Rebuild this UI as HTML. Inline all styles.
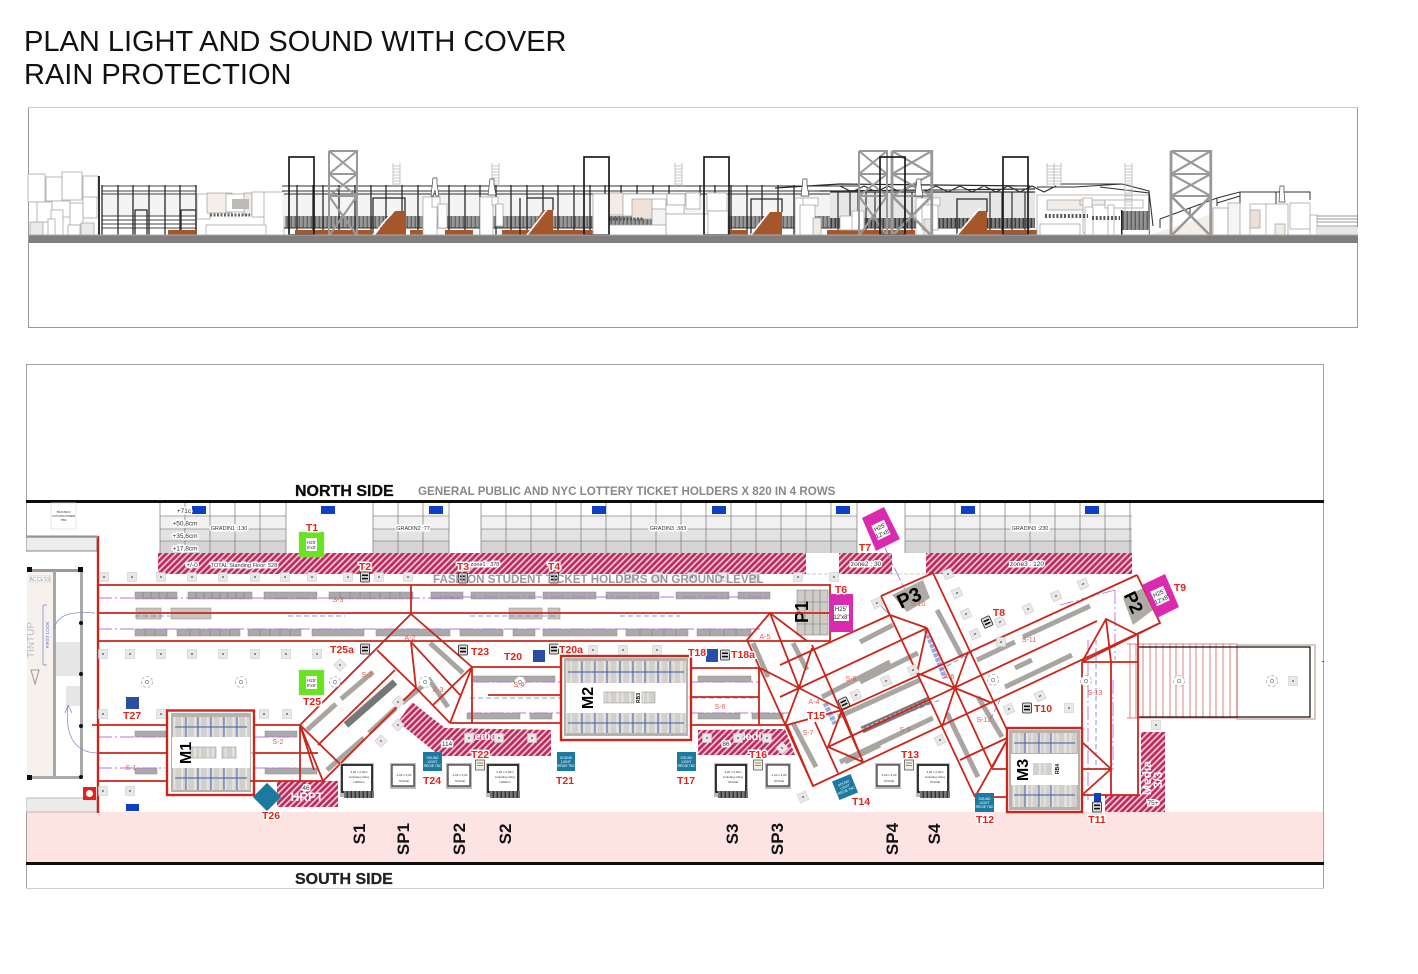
<!DOCTYPE html>
<html lang="en"><head><meta charset="utf-8"><title>Plan Light and Sound</title>
<style>
html,body{margin:0;padding:0;background:#fff;width:1418px;height:974px;overflow:hidden}
svg{display:block;position:absolute;left:0;top:0}
text{font-family:"Liberation Sans",Arial,sans-serif}
.b{filter:url(#soft)}
.tl{fill:#e3241b;font-weight:700;font-size:10.5px;text-anchor:middle;paint-order:stroke;stroke:#fff;stroke-width:3px}
.sl{fill:#ea5a50;font-size:7px;text-anchor:middle}
.v{font-weight:700;font-size:17px;text-anchor:middle;fill:#111}
.sm{font-size:5.5px;fill:#333;text-anchor:middle;paint-order:stroke;stroke:#fff;stroke-width:3px}
.h{font-size:6px;fill:#222;text-anchor:middle}
.wh{fill:#fff;font-weight:700;text-anchor:middle}
.st{font-size:3px;fill:#333;text-anchor:middle}
.r{fill:none;stroke:#c9281a;stroke-width:1.8}
.rt{fill:none;stroke:#c9281a;stroke-width:2.4}
.g{fill:#aaa;stroke:#8c8c8c;stroke-width:.5}
.row{fill:none;stroke:#a9a6a2;stroke-width:5}
.pd{fill:none;stroke:#bb72dd;stroke-width:.9;stroke-dasharray:14 3 2 3}
.bd{fill:none;stroke:#7078d8;stroke-width:.8;stroke-dasharray:5 3}
.box{fill:#fff;stroke:#a8a8a8;stroke-width:.8}
.k{fill:none;stroke:#2b2b2b;stroke-width:1.3}
.kk{fill:none;stroke:#1c1c1c;stroke-width:1.7}
.brn{fill:#a5562a}
</style></head><body>
<svg width="1418" height="974" viewBox="0 0 1418 974" xmlns="http://www.w3.org/2000/svg">
<defs>
<filter id="soft" x="0" y="0" width="100%" height="100%"><feGaussianBlur stdDeviation="0.35"/></filter>
<pattern id="hatch" width="4.4" height="4.4" patternUnits="userSpaceOnUse" patternTransform="rotate(45)">
<rect width="4.4" height="4.4" fill="#bd2a5b"/><rect width="1.7" height="4.4" fill="#f3ccd9"/></pattern>
<pattern id="seat" width="12.8" height="10" patternUnits="userSpaceOnUse">
<rect width="12.8" height="10" fill="#d3d0cb"/><rect x="2" width="2" height="10" fill="#e9e7e3"/><rect x="7" width="2" height="10" fill="#e4e2de"/></pattern>
<pattern id="grille" width="4" height="4" patternUnits="userSpaceOnUse">
<rect width="4" height="4" fill="#777"/><rect x="2.6" width="1.4" height="4" fill="#333"/></pattern>
<g id="m"><rect x="-4.5" y="-4.5" width="9" height="9" fill="#e8e8e8" stroke="#ccc" stroke-width=".6"/><rect x="-1" y="-.5" width="2" height="1" fill="#333"/></g>
<g id="d"><rect x="-4.5" y="-5" width="9" height="10" rx="1" fill="#ddd" stroke="#222" stroke-width=".8"/><rect x="-3" y="-2.5" width="6" height="1.6" fill="#111"/><rect x="-3" y=".8" width="6" height="1.6" fill="#111"/></g>
<g id="y"><rect x="-4.5" y="-5" width="9" height="10" fill="#efefe4" stroke="#444" stroke-width=".7"/><rect x="-3" y="-2.5" width="6" height="1" fill="#a08c3c"/><rect x="-3" y="0" width="6" height="1" fill="#a08c3c"/></g>
<g id="c"><circle r="5.5" fill="#fff" stroke="#aaa" stroke-width=".8" stroke-dasharray="3 2"/><circle r="1.6" fill="#fff" stroke="#888" stroke-width=".7"/></g>
<g id="tw"><path d="M0 0H28V85M0 0V85M0 23H28M0 45H28M0 0L28 23M28 0L0 23M0 23L28 45M28 23L0 45M0 45L28 85M28 45L0 85M14 0" fill="none" stroke="#999" stroke-width="2"/></g>
<g id="lad"><path d="M0 0V24M7 0V24M0 3H7M0 6H7M0 9H7M0 12H7M0 15H7M0 18H7M0 21H7" fill="none" stroke="#b8b8b8" stroke-width=".8"/></g>
<g id="sbig"><rect x="-4" y="-2" width="34" height="34" fill="#bbb"/><rect x="-2" y="0" width="30" height="27" fill="#fff" stroke="#222" stroke-width="1.8"/><rect x="0" y="26" width="30" height="7" fill="url(#grille)"/></g>
<g id="ssm"><rect x="-3" y="-2" width="26" height="26" fill="#bbb"/><rect x="-1" y="0" width="22" height="21" fill="#fff" stroke="#333" stroke-width="1.2"/></g>
</defs>

<rect width="1418" height="974" fill="#fff"/>

<text x="24" y="51" font-size="29" fill="#111">PLAN LIGHT AND SOUND WITH COVER</text>
<text x="24" y="84" font-size="29" fill="#111">RAIN PROTECTION</text>

<g class="b">
<!-- ELEVATION -->
<rect x="28.5" y="107.5" width="1329" height="220" fill="#fff" stroke="#9a9a9a"/>
<g class="box" stroke-width=".7">
<rect x="62" y="172" width="20" height="28"/><rect x="28" y="174" width="17" height="28"/><rect x="46" y="177" width="16" height="24"/><rect x="83" y="176" width="15" height="22"/>
<rect x="37" y="202" width="15" height="20"/><rect x="52" y="201" width="18" height="16"/><rect x="51" y="210" width="12" height="25"/><rect x="70" y="203" width="13" height="22"/><rect x="83" y="197" width="14" height="21"/>
<rect x="30" y="222" width="13" height="13" style="fill:#eaeaea"/><rect x="48" y="219" width="7" height="16"/><rect x="68" y="225" width="12" height="10"/><rect x="81" y="223" width="13" height="12" style="fill:#eaeaea"/>
</g>
<rect x="98" y="176" width="2" height="59" fill="#333"/>
<rect x="102" y="192" width="94" height="24" fill="#f4f4f4"/>
<path d="M102 186H196M102 191H196M102 194H196M102 216H196M102 220H196M102 224H196M102 228H196" fill="none" stroke="#444" stroke-width=".9"/>
<path d="M102 185V235M118 185V235M133 185V235M149 185V235M165 185V235M180 185V235M196 185V235" class="k"/>
<path d="M135 235V210H147V235M181 235V210H196V235" class="k"/>
<rect x="168" y="230" width="29" height="5" class="brn"/>
<g class="box"><rect x="197" y="194" width="13" height="25"/><rect x="207" y="193" width="25" height="20" style="fill:#f5efe9"/><rect x="226" y="194" width="22" height="18"/><rect x="244" y="193" width="8" height="22" style="fill:#f0ebe5"/><rect x="252" y="192" width="14" height="25"/><rect x="264" y="192" width="20" height="43"/><rect x="206" y="225" width="60" height="10"/></g>
<rect x="232" y="199" width="17" height="10" fill="#bdb9b4"/>
<path d="M210 215h40" stroke="#666" stroke-width="3" stroke-dasharray="2 1.5"/>
<rect x="282" y="192" width="750" height="24" fill="#f4f4f4"/>
<rect x="285" y="216" width="750" height="12" fill="url(#grille)" opacity=".75"/>
<path d="M282 186H860M282 191H860M284 194H840M284 228H1030" fill="none" stroke="#333" stroke-width="1"/>
<path d="M297 185V235M313 185V235M323 185V235M339 185V235M355 185V235M371 185V235M386 185V235M402 185V235M418 185V235M433 185V235M449 185V235M465 185V235M480 185V235M496 185V235M511 185V235M527 185V235M543 185V235M558 185V235M574 185V235M590 185V235M605 185V196M621 185V196M637 185V196M653 185V196M669 185V196M700 185V196M715 185V196M731 185V235M747 185V235M762 185V235M778 185V235M794 185V235" class="k"/>
<path d="M775 188 L840 184 L1030 186 M820 191 L1035 189 M840 186l12 6l12-6l12 6l12-6l12 6l12-6l12 6l12-6l12 6l12-6l12 6l12-6l12 6l12-6l12 6l12-6l12 6l12-6" fill="none" stroke="#2a2a2a" stroke-width="1.2"/>
<rect x="830" y="192" width="205" height="26" fill="#e7e7e7"/>
<rect x="830" y="218" width="205" height="10" fill="url(#grille)" opacity=".8"/>
<path d="M830 192H1035M838 192V235M850 192V235M858 192V235M866 192V235M875 192V235M905 192V235M912 192V235M922 192V235M990 192V235M1002 192V235M1012 192V235M1025 192V235" fill="none" stroke="#333" stroke-width="1.2"/>
<g class="brn"><rect x="295" y="230" width="77" height="5"/><rect x="410" y="230" width="13" height="5"/><rect x="445" y="230" width="28" height="5"/><rect x="502" y="230" width="91" height="5"/><rect x="727" y="230" width="20" height="5"/><rect x="827" y="230" width="88" height="5"/><rect x="987" y="230" width="50" height="5"/><rect x="1122" y="230" width="28" height="5"/>
<polygon points="375,235 406,235 406,211 395,211"/><polygon points="527,235 553,235 553,210 543,210"/><polygon points="751,235 782,235 782,212 770,212"/><polygon points="957,235 987,235 987,211 977,211"/></g>
<path d="M373 235V198H405V211M527 198H553V210M520 235V198M751 235V199H782V212M957 235V199H987V212" class="k"/>
<path d="M373 235L396 208M527 235L548 208M751 235L772 208M957 235L980 208" stroke="#fff" stroke-width="1.6" fill="none"/>
<g class="box">
<rect x="423" y="197" width="14" height="38"/><rect x="432" y="197" width="8" height="10"/><rect x="438" y="204" width="9" height="24"/>
<rect x="480" y="197" width="13" height="38"/><rect x="492" y="197" width="6" height="8"/><rect x="496" y="204" width="7" height="22"/>
<rect x="593" y="194" width="16" height="41"/><rect x="609" y="193" width="14" height="22" style="fill:#f5ece6"/><rect x="623" y="194" width="44" height="22"/><rect x="632" y="199" width="20" height="20" style="fill:#efe2d8"/><rect x="652" y="199" width="14" height="11"/><rect x="652" y="209" width="14" height="16" style="fill:#f4f4f4"/><rect x="667" y="194" width="18" height="11"/><rect x="666" y="205" width="18" height="9"/><rect x="666" y="214" width="44" height="21"/><rect x="686" y="193" width="14" height="16"/><rect x="707" y="193" width="20" height="18"/><rect x="708" y="211" width="20" height="24"/><rect x="609" y="225" width="57" height="10"/>
<rect x="795" y="198" width="9" height="37"/><rect x="803" y="198" width="15" height="8"/><rect x="800" y="205" width="15" height="30"/><rect x="813" y="218" width="8" height="17" style="fill:#f0ebe5"/>
<rect x="840" y="216" width="24" height="14"/><rect x="852" y="211" width="12" height="19"/>
<rect x="916" y="198" width="14" height="37"/><rect x="928" y="198" width="12" height="8"/><rect x="922" y="205" width="16" height="25"/><rect x="924" y="219" width="8" height="16" style="fill:#f0e4da"/>
</g>
<path d="M609 219h34" stroke="#555" stroke-width="3" stroke-dasharray="2 1.5"/>
<g class="box"><rect x="1037" y="195" width="112" height="40"/><rect x="1047" y="200" width="45" height="10" style="fill:#f1ece7"/><rect x="1080" y="200" width="25" height="5" style="fill:#f5efe9"/><rect x="1083" y="198" width="9" height="35"/><rect x="1040" y="224" width="40" height="11"/><rect x="1085" y="207" width="8" height="28"/><rect x="1105" y="200" width="38" height="8"/><rect x="1108" y="205" width="6" height="30"/></g>
<path d="M1045 216h43M1092 218h28" stroke="#555" stroke-width="4" stroke-dasharray="2 1.8"/>
<path d="M1037 187H1075L1122 184L1149 191V225M1060 184H1122M1149 191L1153 226M1100 187L1149 193" fill="none" stroke="#333" stroke-width="1.1"/>
<rect x="1122" y="211" width="28" height="19" fill="url(#grille)" opacity=".8"/>
<rect x="1121" y="210" width="1.5" height="25" fill="#222"/>
<polygon points="1150,235 1217,212 1217,235" fill="#f4eee8"/>
<path d="M1160 219L1217 198L1240 192H1310V200M1240 192V205M1276 192V205M1160 219V228M1172 213V222M1190 208V218M1217 198V206M1217 203L1240 196" fill="none" stroke="#333" stroke-width="1"/>
<g class="box"><rect x="1213" y="208" width="15" height="27"/><rect x="1228" y="203" width="12" height="32" style="fill:#f5f5f5"/><rect x="1250" y="204" width="18" height="31" style="fill:#fff"/><rect x="1250" y="210" width="10" height="18" style="fill:#ecdfd4"/><rect x="1266" y="204" width="22" height="31"/><rect x="1275" y="224" width="10" height="11" style="fill:#f1ebe5"/><rect x="1290" y="203" width="20" height="26"/><rect x="1310" y="215" width="7" height="20"/></g>
<rect x="1317" y="227" width="41" height="8" fill="#e6e6e6"/>
<path d="M1317 216H1358M1317 219H1358M1317 222H1358M1317 226H1358" stroke="#777" stroke-width=".7" fill="none"/>
<use href="#lad" x="393" y="163"/><use href="#lad" x="492" y="163"/><use href="#lad" x="675" y="163"/><use href="#lad" x="1047" y="163"/><use href="#lad" x="1054" y="163"/><use href="#lad" x="1125" y="163"/><use href="#lad" x="1125" y="187"/>
<use href="#tw" x="329" y="151"/>
<use href="#tw" x="859" y="151"/>
<g transform="translate(892 151) scale(1.42 1)"><use href="#tw"/></g>
<g transform="translate(1171 151) scale(1.42 1)"><use href="#tw"/></g>
<path d="M433 178h4v6l2 12h-3l-1-6l-2 6h-2z M490 179h4v6l2 10h-8z M803 179h4v6l2 11h-8z M917 179h4v6l2 11h-8z M1280 186h4v6l1 10h-6z" fill="#fff" stroke="#444" stroke-width=".7"/>
<g class="kk"><rect x="289" y="157" width="25" height="78"/><rect x="584" y="157" width="25" height="78"/><rect x="704" y="157" width="25" height="78"/><rect x="880" y="157" width="25" height="78"/><rect x="1003" y="157" width="25" height="78"/></g>
<rect x="29" y="235" width="1329" height="8" fill="#7f7f7f"/>
<rect x="29" y="234.5" width="1329" height="1" fill="#aaa"/>

<!-- PLAN -->
<rect x="26.5" y="364.5" width="1297" height="524" fill="#fff" stroke="#a2a2a2"/>
<rect x="27" y="812" width="1296" height="50" fill="#fde4e3"/>
<rect x="26" y="500" width="1298" height="3" fill="#0c0c0c"/>
<rect x="26" y="862" width="1298" height="3" fill="#111"/>

<g>
<rect x="160" y="516" width="126" height="13" fill="#f1f1f1"/><rect x="160" y="529" width="126" height="12" fill="#e3e3e3"/><rect x="160" y="541" width="126" height="12" fill="#d4d4d4"/>
<rect x="373" y="516" width="76" height="13" fill="#f1f1f1"/><rect x="373" y="529" width="76" height="12" fill="#e3e3e3"/><rect x="373" y="541" width="76" height="12" fill="#d4d4d4"/>
<rect x="481" y="516" width="376" height="13" fill="#f1f1f1"/><rect x="481" y="529" width="376" height="12" fill="#e3e3e3"/><rect x="481" y="541" width="376" height="12" fill="#d4d4d4"/>
<rect x="905" y="516" width="227" height="13" fill="#f1f1f1"/><rect x="905" y="529" width="227" height="12" fill="#e3e3e3"/><rect x="905" y="541" width="227" height="12" fill="#d4d4d4"/>
<path d="M160 516H286M160 529H286M160 541H286M373 516H449M373 529H449M373 541H449M481 516H857M481 529H857M481 541H857M905 516H1132M905 529H1132M905 541H1132" stroke="#8f8f8f" stroke-width=".7" fill="none"/>
<path d="M160 503V553M185 503V553M210 503V553M235 503V553M260 503V553M286 503V553M373 503V553M398 503V553M423 503V553M449 503V553M481 503V553M506 503V553M531 503V553M556 503V553M581 503V553M606 503V553M631 503V553M656 503V553M681 503V553M706 503V553M731 503V553M756 503V553M781 503V553M806 503V553M831 503V553M857 503V553M905 503V553M930 503V553M955 503V553M980 503V553M1005 503V553M1030 503V553M1055 503V553M1080 503V553M1105 503V553M1130 503V553" stroke="#777" stroke-width=".7" fill="none"/>
<g fill="#0a40c4"><rect x="192" y="506" width="14" height="8"/><rect x="429" y="506" width="14" height="8"/><rect x="321" y="506" width="14" height="8"/><rect x="592" y="506" width="14" height="8"/><rect x="712" y="506" width="14" height="8"/><rect x="836" y="506" width="14" height="8"/><rect x="961" y="506" width="14" height="8"/><rect x="1085" y="506" width="14" height="8"/></g>
</g>
<g class="sm" style="font-size:6.5px"><text x="184" y="513">+71c</text><text x="185" y="525.5">+50,8cm</text><text x="185" y="538">+35,6cm</text><text x="185" y="550.5">+17,8cm</text></g>
<text x="229" y="530" class="sm">GRADIN1 :130</text><text x="413" y="530" class="sm">GRADIN2 :77</text><text x="668" y="530" class="sm">GRADIN3 :383</text><text x="1030" y="530" class="sm">GRADIN3 :230</text>
<rect x="158" y="553" width="648" height="21" fill="url(#hatch)"/><rect x="839" y="553" width="53" height="21" fill="url(#hatch)"/><rect x="926" y="553" width="206" height="21" fill="url(#hatch)"/>
<path d="M806 574H839M892 574H926" stroke="#999" stroke-width=".6" stroke-dasharray="4 2"/>
<text x="192" y="567" class="sm" style="font-size:6.5px">+/-0</text><text x="244" y="567" class="sm">TOTAL Standing Floor: 528</text><text x="485" y="566" class="sm">zone1 : 378</text><text x="866" y="566" class="sm" style="font-size:6.5px">zone2 : 30</text><text x="1027" y="566" class="sm" style="font-size:6.5px">zone3 : 120</text>
<rect x="51" y="503" width="25" height="26" fill="#fff" stroke="#ddd" stroke-width=".7"/>
<g class="st"><text x="63.5" y="513">TRANSFO</text><text x="63.5" y="517">A POSITIONNER</text><text x="63.5" y="521">TBD</text></g>

<!-- left building -->
<rect x="26" y="536" width="72" height="276" fill="#fff"/>
<rect x="26" y="536" width="71" height="15" fill="#ededed" stroke="#888" stroke-width="1"/>
<rect x="27" y="571" width="26" height="206" fill="#f6f1ec"/>
<rect x="27" y="569" width="53" height="3" fill="#999"/>
<rect x="53" y="571" width="3" height="206" fill="#a8a8a8"/><rect x="80" y="571" width="3" height="206" fill="#a8a8a8"/>
<rect x="27" y="776" width="55" height="3" fill="#aaa"/>
<rect x="56" y="642" width="24" height="34" fill="#e6e6e6"/>
<rect x="66" y="686" width="14" height="20" fill="#e6e6e6"/>
<rect x="26" y="798" width="71" height="14" fill="#ececec" stroke="#aaa" stroke-width=".8"/>
<rect x="30" y="576" width="20" height="6" fill="#fff" stroke="#bbb" stroke-width=".5"/><text x="40" y="581" font-size="5" fill="#999" text-anchor="middle">ACCESS</text>
<text transform="translate(34 640) rotate(-90)" font-size="10" fill="#bbb" text-anchor="middle">TINTUP</text>
<path d="M31 670h8l-4 14z" fill="none" stroke="#999"/>
<path d="M43 605v60M43 605h4M43 665h4" stroke="#7080d0" stroke-width=".7" fill="none"/>
<text transform="translate(49 635) rotate(-90)" font-size="4.5" fill="#6070d0" text-anchor="middle">FIRST LOOK</text>
<path d="M95 613c-25-2-38 2-41 16M68 705c-3 25 3 48 30 48M68 705l-3 8M68 705l4 8" stroke="#8090cc" stroke-width=".8" fill="none"/>
<g fill="#111"><circle cx="81" cy="623" r="2"/><circle cx="81" cy="674" r="2"/><circle cx="81" cy="726" r="2"/><circle cx="81" cy="777" r="2"/><rect x="27" y="567" width="5" height="5"/><rect x="78" y="567" width="5" height="5"/><rect x="27" y="775" width="5" height="5"/></g>
<rect x="83" y="787" width="13" height="13" fill="#e3201b"/><circle cx="89.5" cy="793.5" r="3.5" fill="#fff"/>

<!-- seat rows -->
<g class="g">
<rect x="135" y="592" width="42" height="7"/><rect x="188" y="592" width="64" height="7"/><rect x="264" y="592" width="53" height="7"/><rect x="329" y="592" width="84" height="7"/><rect x="431" y="592" width="32" height="7"/><rect x="471" y="592" width="64" height="7"/><rect x="543" y="592" width="53" height="7"/><rect x="606" y="592" width="53" height="7"/><rect x="676" y="592" width="53" height="7"/><rect x="738" y="592" width="32" height="7"/>
<rect x="135" y="629" width="32" height="7"/><rect x="177" y="629" width="63" height="7"/><rect x="248" y="629" width="53" height="7"/><rect x="312" y="629" width="52" height="7"/><rect x="376" y="629" width="74" height="7"/><rect x="460" y="629" width="43" height="7"/><rect x="513" y="629" width="22" height="7"/><rect x="543" y="629" width="74" height="7"/><rect x="626" y="629" width="62" height="7"/><rect x="697" y="629" width="54" height="7"/>
<rect x="136" y="608" width="25" height="11" fill="#c8c4be"/><rect x="171" y="608" width="40" height="11" fill="#c8c4be"/><rect x="509" y="608" width="33" height="11" fill="#c8c4be"/><rect x="548" y="608" width="12" height="11" fill="#c8c4be"/>
<rect x="135" y="731" width="31" height="6"/><rect x="135" y="768" width="22" height="6"/><rect x="265" y="731" width="32" height="6"/><rect x="265" y="768" width="52" height="6"/>
<rect x="473" y="676" width="82" height="6"/><rect x="467" y="713" width="53" height="6"/><rect x="530" y="713" width="22" height="6"/><rect x="698" y="676" width="53" height="6"/><rect x="698" y="713" width="42" height="6"/><rect x="752" y="713" width="31" height="6"/>
</g>
<path d="M143 592v7M151 592v7M159 592v7M167 592v7M196 592v7M204 592v7M212 592v7M220 592v7M228 592v7M236 592v7M244 592v7M340 592v7M350 592v7M360 592v7M370 592v7M380 592v7M390 592v7M400 592v7M145 629v7M155 629v7M190 629v7M200 629v7M210 629v7M220 629v7M230 629v7M260 629v7M270 629v7M280 629v7M290 629v7M640 629v7M652 629v7M664 629v7M676 629v7M710 629v7M724 629v7M736 629v7" stroke="#777" stroke-width=".5" fill="none"/>
<path class="row" d="M307 730L336 704M341 699L373 672M327 770L364 738M369 733L396 708M402 703L424 685M430 643L463 673M428 678L448 707M893 625L860 642M1015 642L977 660M1090 606L1023 637M1072 655L1005 687M937 610L962 657M918 653L860 682M933 718L840 762M920 680L838 717M947 713L978 777M978 697L1002 737M793 723L816 767M753 643L768 677M793 643L807 670M822 697L890 662M845 762L880 745M1032 660L1015 668"/>
<path d="M346 725L395 682" stroke="#777" stroke-width="7" fill="none"/>
<path d="M862 730L929 700" stroke="#777" stroke-width="7" fill="none"/>
<path d="M862 730L929 700" stroke="#bbb" stroke-width="3" stroke-dasharray="3 2" fill="none"/>
<path d="M926 630L945 678" stroke="#9fa8dd" stroke-width="5" fill="none" stroke-dasharray="4 1"/>
<path d="M825 703L835 724" stroke="#9fa8dd" stroke-width="5" fill="none" stroke-dasharray="4 1"/>
<path class="pd" d="M98 598H460M440 597H770M98 629H460M460 629H760M98 737H165M255 737H300M98 768H165M255 768H300M475 682H560M468 713H560M690 682H760M690 713H790M1088 640L1088 800M1113 680L1113 770"/>
<path class="pd" d="M885 548L905 590M890 615L880 605M1060 605L1115 590M1115 590V660"/>
<path class="bd" d="M288 616H345M135 616H170M470 616H555M620 616H680M240 753H300M470 698H560M693 698H760M940 670L990 642M890 720L940 700M1096 640V770M1000 700L990 720"/>

<rect x="277" y="781" width="61" height="26" fill="url(#hatch)"/>
<polygon points="398,722 412,702 445,728 551,730 551,756 440,756" fill="url(#hatch)"/>
<polygon points="698,730 785,729 795,755 698,755" fill="url(#hatch)"/>
<polygon points="1141,732 1165,732 1165,812 1105,812 1105,795 1141,795" fill="url(#hatch)"/>
<text x="307" y="801" class="wh" font-size="12" font-weight="400">HRPT</text><text x="306" y="790" class="sm" style="font-size:6.5px">46</text>
<text x="481" y="740" class="wh" font-size="11">Media</text><text x="447" y="746" class="sm" style="font-size:6.5px">114</text>
<text x="752" y="740" class="wh" font-size="11">Media</text><text x="726" y="746" class="sm" style="font-size:6.5px">86</text>
<text transform="translate(1151 778) rotate(-90)" class="wh" font-size="12">Media</text><text transform="translate(1162 780) rotate(-90)" class="wh" font-size="12">3/3</text><text x="1153" y="805" class="sm" style="font-size:6.5px">75+</text>

<!-- M1 -->
<rect x="171" y="713" width="80" height="79" fill="#b5b3af"/>
<rect x="173" y="717" width="77" height="20" fill="url(#seat)"/><rect x="173" y="768" width="77" height="22" fill="url(#seat)"/><rect x="172" y="737" width="78" height="31" fill="#fff"/>
<path d="M186 717V737M198 717V737M211 717V737M224 717V737M237 717V737M186 768V790M198 768V790M211 768V790M224 768V790M237 768V790M175 727H247M175 778H247" stroke="#3a5aa8" stroke-width=".9" fill="none"/>
<rect x="190" y="747" width="26" height="11" fill="url(#seat)" stroke="#999" stroke-width=".6"/><rect x="222" y="747" width="14" height="11" fill="url(#seat)" stroke="#999" stroke-width=".6"/>
<text transform="translate(191 753) rotate(-90)" font-size="16" font-weight="700" text-anchor="middle" fill="#000">M1</text>
<rect x="167" y="710.5" width="87" height="84.5" class="rt"/>
<!-- M2 -->
<rect x="564" y="658" width="124" height="78" fill="#b5b3af"/>
<rect x="566" y="661" width="120" height="22" fill="url(#seat)"/><rect x="566" y="713" width="120" height="20" fill="url(#seat)"/><rect x="566" y="683" width="120" height="30" fill="#fff"/>
<path d="M582 661V683M595 661V683M607 661V683M620 661V683M633 661V683M645 661V683M658 661V683M670 661V683M582 713V733M595 713V733M607 713V733M620 713V733M633 713V733M645 713V733M658 713V733M670 713V733M568 672H684M568 723H684" stroke="#3a5aa8" stroke-width=".9" fill="none"/>
<rect x="604" y="692" width="30" height="11" fill="url(#seat)" stroke="#999" stroke-width=".6"/><rect x="642" y="692" width="13" height="11" fill="url(#seat)" stroke="#999" stroke-width=".6"/>
<text transform="translate(593 698) rotate(-90)" font-size="16" font-weight="700" text-anchor="middle" fill="#000">M2</text>
<text transform="translate(640 698) rotate(-90)" font-size="5" font-weight="700" text-anchor="middle" fill="#000">RB3</text>
<rect x="561" y="656" width="130" height="84" class="rt"/>
<!-- M3 -->
<rect x="1009" y="730" width="71" height="80" fill="#b5b3af"/>
<rect x="1012" y="733" width="65" height="20" fill="url(#seat)"/><rect x="1012" y="785" width="65" height="22" fill="url(#seat)"/><rect x="1011" y="754" width="67" height="31" fill="#fff"/>
<path d="M1025 733V753M1039 733V753M1051 733V753M1025 785V807M1039 785V807M1051 785V807M1014 743H1075M1014 795H1075" stroke="#3a5aa8" stroke-width=".9" fill="none"/>
<rect x="1033" y="763" width="19" height="12" fill="url(#seat)"/>
<text transform="translate(1028 770) rotate(-90)" font-size="16" font-weight="700" text-anchor="middle" fill="#000">M3</text>
<text transform="translate(1059 769) rotate(-90)" font-size="5" font-weight="700" text-anchor="middle" fill="#000">RB4</text>
<rect x="1007" y="728" width="75" height="84" class="rt"/>

<!-- P1 -->
<rect x="797" y="590" width="31" height="45" fill="#cfcbc5" stroke="#888" stroke-width=".6"/>
<path d="M797 602H828M797 613H828M797 624H828M805 590V635M813 590V635M820 590V635" stroke="#777" stroke-width=".6"/>
<text transform="translate(808 612) rotate(-90)" font-size="18" font-weight="700" text-anchor="middle" fill="#000">P1</text>
<!-- P3 P2 -->
<polygon points="892,595 923,580 930,598 907,612" fill="#aeaaa5"/>
<text transform="translate(912 604) rotate(-25)" font-size="20" font-weight="700" text-anchor="middle" fill="#000">P3</text>
<polygon points="1123,598 1147,586 1157,607 1133,625" fill="#aeaaa5"/>
<text transform="translate(1128 605) rotate(65)" font-size="18" font-weight="700" text-anchor="middle" fill="#000">P2</text>

<rect x="1237" y="645" width="78" height="74" fill="none" stroke="#c9b3a8" stroke-width="1.5"/>
<path d="M1127 644H1237M1127 718H1237M1130 644V718M1136 644V718M1143 644V718M1150 644V718M1156 644V718M1163 644V718M1170 644V718M1176 644V718M1183 644V718M1190 644V718M1196 644V718M1203 644V718M1210 644V718M1216 644V718M1223 644V718M1230 644V718M1237 644V718" stroke="#d4655c" stroke-width=".8" fill="none"/>
<path d="M1139 647H1310V717H1139" stroke="#111" stroke-width="1.2" fill="none"/>
<rect x="1322" y="661" width="2" height="1" fill="#c9281a"/>

<!-- RED STRUCTURE -->
<g class="r">
<path d="M98 585H830V641M98 613H830M98 641H830"/>
<path d="M411 585V614M411 614L300 725M377 650L416 688M300 725L340 764M416 688L323 781M395 670L318 745M300 725L323 781M300 725L314 770M300 725V781M411 614L472 667M411 642L460 695M411 642L416 688M472 667L450 723M472 667L433 705M416 688L450 723M472 667H561M450 723H561M472 667V723M488 695H561"/>
<path d="M92 725H167M98 753H167M98 781H167M254 725H300M254 753H300M250 781H323M300 753H318"/>
<path d="M691 668H759M691 697H759M691 725H787M759 668V725"/>
<path d="M881 596L933 573L1007 730M881 596L975 797M1137 575L1160 623L813 786L747 640L770 613L807 641"/>
<path d="M1137 575L917 676L842 710L787 725M1097 621L828 747M927 628L780 697M890 615L780 665M812 645L863 762M787 725L813 786M815 722L838 773M927 628L992 768M890 615L927 628M927 628L917 673M917 673L955 688M968 652L955 688L942 727M955 688L992 703M799 688L842 710M842 710L828 747L863 762M842 710L863 762M812 648L799 688L785 725M799 688L770 613M799 688L760 668"/>
<path d="M992 768L1007 740M975 797L1007 740M960 760L1007 738M992 769H1007M975 797H1007"/>
<path d="M1082 742L1111 769L1082 795M1082 769H1111M1082 662V728M1082 662H1138M1138 635V795M1082 795H1140M1111 662V795M1082 662L1106 619L1138 635M1106 619L1111 662M1082 662L1160 623"/>
</g>
<path d="M98 536V813" stroke="#c9281a" stroke-width="2.4" fill="none"/>
<path d="M26 537H98" stroke="#999" stroke-width="1.5" fill="none"/>

<rect x="829" y="594" width="24" height="38" fill="#d92bb0"/>
<rect x="834" y="605" width="15" height="16" fill="#fff"/><text x="841" y="611" class="h">H25'</text><text x="841" y="619" class="h">12'x8'</text>
<polygon points="862,518 884,507 900,539 876,551" fill="#d92bb0"/>
<g transform="translate(881 530) rotate(-25)"><rect x="-7" y="-8" width="14" height="16" fill="#fff"/><text y="-1" class="h">H25'</text><text y="6" class="h">12'x8'</text></g>
<polygon points="1142,585 1165,574 1179,607 1157,618" fill="#d92bb0"/>
<g transform="translate(1160 596) rotate(-25)"><rect x="-7" y="-8" width="14" height="16" fill="#fff"/><text y="-1" class="h">H25'</text><text y="6" class="h">12'x8'</text></g>
<rect x="299" y="532" width="25" height="25" fill="#67e41a" stroke="#bbb" stroke-width=".5"/><rect x="306" y="538" width="11" height="13" fill="#fff"/><text x="311.5" y="544" class="st" style="font-size:4.5px">H25'</text><text x="311.5" y="549" class="st" style="font-size:4.5px">8'x8'</text>
<rect x="299" y="670" width="25" height="25" fill="#67e41a" stroke="#bbb" stroke-width=".5"/><rect x="306" y="676" width="11" height="13" fill="#fff"/><text x="311.5" y="682" class="st" style="font-size:4.5px">H25'</text><text x="311.5" y="687" class="st" style="font-size:4.5px">8'x8'</text>

<g fill="#1c7aa0"><rect x="557" y="752" width="18" height="19"/><rect x="677" y="752" width="19" height="19"/><rect x="423" y="752" width="19" height="19"/><rect x="975" y="793" width="19" height="19"/>
<rect x="-10" y="-10" width="20" height="20" transform="translate(845 787) rotate(-22)"/><rect x="-10" y="-10" width="20" height="20" transform="translate(267 797) rotate(45)"/></g>
<g fill="#fff" font-size="3.3" text-anchor="middle"><text x="566" y="759">SOUND</text><text x="566" y="763">LIGHT</text><text x="566" y="767">RÉGIE TBC</text><text x="686.5" y="759">SOUND</text><text x="686.5" y="763">LIGHT</text><text x="686.5" y="767">RÉGIE TBC</text><text x="432.5" y="759">SOUND</text><text x="432.5" y="763">LIGHT</text><text x="432.5" y="767">RÉGIE TBC</text><text x="984.5" y="800">SOUND</text><text x="984.5" y="804">LIGHT</text><text x="984.5" y="808">RÉGIE TBC</text>
<g transform="translate(845 787) rotate(-22)"><text y="-3">SOUND</text><text y="1">LIGHT</text><text y="5">RÉGIE TBC</text></g></g>
<g fill="#2a4ea5"><rect x="126" y="697" width="13" height="12"/><rect x="533" y="650" width="12" height="12"/><rect x="706" y="649" width="12" height="13"/></g>
<g fill="#0a40c8"><rect x="126" y="804" width="13" height="7"/><rect x="1094" y="793" width="7" height="13"/></g>

<use href="#sbig" x="344" y="765"/><use href="#ssm" x="393" y="765"/><use href="#ssm" x="449" y="765"/><use href="#sbig" x="490" y="765"/><use href="#sbig" x="718" y="765"/><use href="#ssm" x="768" y="765"/><use href="#ssm" x="878" y="765"/><use href="#sbig" x="920" y="765"/>
<g class="st"><text x="359" y="773">3,20 x 2,20m</text><text x="359" y="778">including riding</text><text x="359" y="783">H250cm</text><text x="505" y="773">3,20 x 2,20m</text><text x="505" y="778">including riding</text><text x="505" y="783">H250cm</text><text x="733" y="773">3,20 x 2,20m</text><text x="733" y="778">including riding</text><text x="733" y="783">STAGE</text><text x="935" y="773">3,20 x 2,20m</text><text x="935" y="778">including riding</text><text x="935" y="783">STAGE</text><text x="404" y="776">2,20 x 2,20</text><text x="404" y="782">STAGE</text><text x="460" y="776">2,20 x 2,20</text><text x="460" y="782">STAGE</text><text x="779" y="776">2,20 x 2,20</text><text x="779" y="782">STAGE</text><text x="889" y="776">2,20 x 2,20</text><text x="889" y="782">STAGE</text></g>

<g>
<use href="#m" x="104" y="577"/><use href="#m" x="132" y="577"/><use href="#m" x="161" y="577"/><use href="#m" x="192" y="577"/><use href="#m" x="223" y="577"/><use href="#m" x="255" y="577"/><use href="#m" x="285" y="577"/><use href="#m" x="312" y="577"/><use href="#m" x="348" y="577"/><use href="#m" x="379" y="577"/><use href="#m" x="408" y="577"/><use href="#m" x="630" y="577"/><use href="#m" x="658" y="577"/><use href="#m" x="692" y="577"/><use href="#m" x="723" y="577"/><use href="#m" x="755" y="577"/><use href="#m" x="798" y="577"/><use href="#m" x="834" y="577"/>
<use href="#m" x="103" y="654"/><use href="#m" x="130" y="654"/><use href="#m" x="161" y="654"/><use href="#m" x="192" y="654"/><use href="#m" x="223" y="654"/><use href="#m" x="255" y="654"/><use href="#m" x="286" y="654"/><use href="#m" x="317" y="654"/><use href="#m" x="593" y="650"/><use href="#m" x="623" y="650"/><use href="#m" x="657" y="650"/>
<use href="#m" x="103" y="714"/><use href="#m" x="161" y="714"/><use href="#m" x="264" y="714"/><use href="#m" x="287" y="714"/><use href="#m" x="103" y="791"/><use href="#m" x="130" y="791"/><use href="#m" x="469" y="738"/><use href="#m" x="499" y="738"/><use href="#m" x="532" y="738"/><use href="#m" x="707" y="738"/><use href="#m" x="738" y="738"/><use href="#m" x="767" y="738"/><use href="#m" x="1156" y="725"/><use href="#m" x="1097" y="810"/>
<use href="#m" transform="translate(948 574) rotate(-25)"/><use href="#m" transform="translate(957 593) rotate(-25)"/><use href="#m" transform="translate(966 614) rotate(-25)"/><use href="#m" transform="translate(975 634) rotate(-25)"/><use href="#m" transform="translate(1000 622) rotate(-25)"/><use href="#m" transform="translate(1028 609) rotate(-25)"/><use href="#m" transform="translate(1056 596) rotate(-25)"/><use href="#m" transform="translate(1083 584) rotate(-25)"/><use href="#m" transform="translate(877 603) rotate(-25)"/>
<use href="#m" transform="translate(1009 709) rotate(-25)"/><use href="#m" transform="translate(1040 696) rotate(-25)"/><use href="#m" transform="translate(1069 708)"/><use href="#m" transform="translate(940 740) rotate(-25)"/><use href="#m" transform="translate(803 797) rotate(-25)"/><use href="#m" transform="translate(856 695) rotate(-25)"/><use href="#m" transform="translate(886 681) rotate(-25)"/><use href="#m" transform="translate(913 670) rotate(-25)"/><use href="#m" transform="translate(1001 642)"/>
<use href="#m" transform="translate(340 665) rotate(45)"/><use href="#m" transform="translate(398 702) rotate(45)"/><use href="#m" transform="translate(398 725) rotate(45)"/><use href="#m" transform="translate(381 741) rotate(45)"/><use href="#m" transform="translate(782 748) rotate(45)"/>
</g>
<use href="#c" x="147" y="682"/><use href="#c" x="241" y="682"/><use href="#c" x="335" y="682"/><use href="#c" x="425" y="682"/><use href="#c" x="520" y="682"/><use href="#c" x="993" y="680"/><use href="#c" x="1086" y="681"/><use href="#c" x="1179" y="681"/><use href="#c" x="1272" y="681"/><use href="#m" x="1293" y="681"/>

<use href="#d" x="365" y="577"/><use href="#d" x="463" y="578"/><use href="#d" x="554" y="578"/><use href="#d" x="365" y="649"/><use href="#d" x="463" y="650"/><use href="#d" x="554" y="649"/><use href="#d" x="725" y="655"/><use href="#d" transform="translate(987 622) rotate(-25)"/><use href="#d" x="1027" y="708"/><use href="#d" transform="translate(844 703) rotate(-25)"/>
<use href="#y" x="909" y="765"/><use href="#y" x="758" y="765"/><use href="#y" x="480" y="765"/><use href="#d" x="1097" y="807"/>
</g>

<text x="295" y="496" font-size="16" font-weight="700" fill="#0b0b0b" stroke="#0b0b0b" stroke-width=".3">NORTH SIDE</text>
<text x="295" y="884" font-size="16" font-weight="700" fill="#222" stroke="#222" stroke-width=".3">SOUTH SIDE</text>
<text x="418" y="495" font-size="11.6" font-weight="700" fill="#888">GENERAL PUBLIC AND NYC LOTTERY TICKET HOLDERS X 820 IN 4 ROWS</text>
<text x="433" y="583" font-size="11.6" font-weight="700" fill="#999">FASHION STUDENT TICKET HOLDERS ON GROUND LEVEL</text>
<g class="v">
<text transform="translate(365 834) rotate(-90)">S1</text><text transform="translate(409 839) rotate(-90)">SP1</text><text transform="translate(465 839) rotate(-90)">SP2</text><text transform="translate(511 834) rotate(-90)">S2</text><text transform="translate(738 834) rotate(-90)">S3</text><text transform="translate(783 839) rotate(-90)">SP3</text><text transform="translate(898 839) rotate(-90)">SP4</text><text transform="translate(940 834) rotate(-90)">S4</text>
</g>
<g class="tl">
<text x="312" y="531">T1</text><text x="365" y="570">T2</text><text x="463" y="570">T3</text><text x="554" y="570">T4</text><text x="841" y="593">T6</text><text x="865" y="551">T7</text><text x="999" y="616">T8</text><text x="1180" y="591">T9</text><text x="1043" y="712">T10</text><text x="1097" y="823">T11</text><text x="985" y="823">T12</text><text x="910" y="758">T13</text><text x="861" y="805">T14</text><text x="816" y="719">T15</text><text x="758" y="758">T16</text><text x="686" y="784">T17</text><text x="697" y="656">T18</text><text x="743" y="658">T18a</text><text x="513" y="660">T20</text><text x="571" y="653">T20a</text><text x="565" y="784">T21</text><text x="480" y="758">T22</text><text x="480" y="655">T23</text><text x="432" y="784">T24</text><text x="312" y="705">T25</text><text x="342" y="653">T25a</text><text x="271" y="819">T26</text><text x="132" y="719">T27</text>
</g>
<g class="sl">
<text x="338" y="602">S-3</text><text x="131" y="770">S-1</text><text x="278" y="744">S-2</text><text x="367" y="677">S-3</text><text x="519" y="687">S-4</text><text x="720" y="709">S-6</text><text x="808" y="735">S-7</text><text x="851" y="681">S-8</text><text x="905" y="732">S-9</text><text x="918" y="606">S-10</text><text x="1029" y="642">S-11</text><text x="984" y="722">S-12</text><text x="1095" y="695">S-13</text><text x="410" y="640">A-2</text><text x="438" y="692">A-3</text><text x="765" y="639">A-5</text><text x="814" y="704">A-4</text><text x="949" y="679">A-6</text>
</g>
</svg>
</body></html>
